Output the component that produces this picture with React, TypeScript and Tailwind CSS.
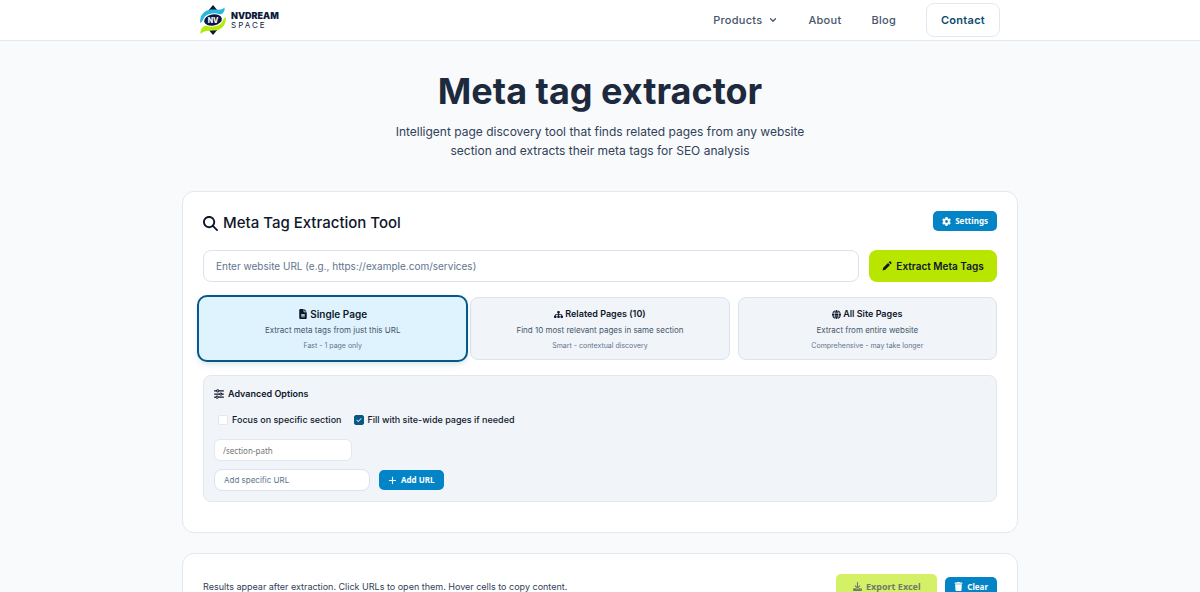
import * as React from "react";
import { clsx } from "clsx";
import {
  FaCheck,
  FaDownload,
  FaFileLines,
  FaGear,
  FaGlobe,
  FaMagnifyingGlass,
  FaPlus,
  FaSitemap,
  FaSliders,
  FaTrash,
} from "react-icons/fa6";
import { ChevronDown } from "lucide-react";

function Logo(): React.ReactElement {
  return (
    <a href="#home" className="flex items-center gap-[5px]" aria-label="NVDream Space">
      <svg viewBox="0 0 26 30" className="h-[30px] w-[26px]" aria-hidden="true">
        <path d="M13 0 18 6 13 10 8 6ZM13 30 8 24 13 20 18 24Z" fill="#0b1740" />
        <path
          d="M0 18C0 10 4 5 11 4.500C17 4 21 6 24.500 2.500C25.500 8 21 10.500 16 9.500C9 8 5 10 3.500 14C2.500 16 1.500 17 0 18Z"
          fill="#27b9dc"
        />
        <path
          d="M26 12C26 20 22 25 15 25.500C9 26 5 24.500 .5 29C0 23 5 19.500 10 20.500C17 22 21 20 22.500 16C23.500 14 24.500 13 26 12Z"
          fill="#b5ea0a"
        />
        <ellipse cx="13" cy="15" rx="10" ry="6.500" fill="#ffffff" transform="rotate(-10 13 15)" />
        <ellipse cx="13" cy="15" rx="9" ry="5.500" fill="#0b1740" transform="rotate(-10 13 15)" />
        <text
          x="13"
          y="17.500"
          textAnchor="middle"
          fill="#ffffff"
          className="font-['Inter',sans-serif] text-[7px] font-extrabold"
        >
          NV
        </text>
      </svg>
      <span className="flex flex-col gap-px text-[#0f1b3d]">
        <span className="text-[9px] leading-[9px] font-black">NVDREAM</span>
        <span className="text-[8px] leading-[8px] tracking-[2px]">SPACE</span>
      </span>
    </a>
  );
}

function PenIcon(): React.ReactElement {
  return (
    <svg viewBox="0 0 20 20" className="size-2.5" fill="currentColor" aria-hidden="true">
      <path d="M1 19 2.500 13.500 12 4l4 4-9.500 9.500ZM13.300 2.700 14.800 1.200Q16 0 17.200 1.200L18.800 2.800Q20 4 18.800 5.200L17.300 6.700Z" />
    </svg>
  );
}

function Header(): React.ReactElement {
  return (
    <header className="border-b border-slate-200 bg-white">
      <div className="mx-auto flex h-10 max-w-[800px] items-center justify-between">
        <Logo />
        <nav className="flex items-center gap-[30px] text-[11px] font-medium tracking-wide text-slate-600">
          <button type="button" className="flex items-center gap-1.5">
            Products
            <ChevronDown className="size-2.5" strokeWidth={3} />
          </button>
          <a href="#about">About</a>
          <a href="#blog">Blog</a>
          <a
            href="#contact"
            className="flex h-[34px] items-center rounded-lg border border-slate-200 px-3.5 font-semibold text-[#0c4a6e]"
          >
            Contact
          </a>
        </nav>
      </div>
    </header>
  );
}

interface BlueButtonProps {
  icon: React.ReactNode;
  children: React.ReactNode;
}

function BlueButton({ icon, children }: BlueButtonProps): React.ReactElement {
  return (
    <button
      type="button"
      className="flex h-5 items-center gap-1 rounded-[5px] bg-[#0284c7] px-[9px] font-['Noto_Sans',sans-serif] text-[8px] font-bold text-white"
    >
      <span className="text-[9px]">{icon}</span>
      {children}
    </button>
  );
}

interface Mode {
  id: string;
  icon: React.ReactNode;
  title: string;
  text: string;
  note: string;
}

const MODES: Mode[] = [
  {
    id: "single",
    icon: <FaFileLines />,
    title: "Single Page",
    text: "Extract meta tags from just this URL",
    note: "Fast - 1 page only",
  },
  {
    id: "related",
    icon: <FaSitemap />,
    title: "Related Pages (10)",
    text: "Find 10 most relevant pages in same section",
    note: "Smart - contextual discovery",
  },
  {
    id: "all",
    icon: <FaGlobe />,
    title: "All Site Pages",
    text: "Extract from entire website",
    note: "Comprehensive - may take longer",
  },
];

function ModePicker(): React.ReactElement {
  const [mode, setMode] = React.useState("single");

  return (
    <div className="mt-[15px] grid grid-cols-3 gap-2">
      {MODES.map((m) => (
        <button
          key={m.id}
          type="button"
          aria-pressed={mode === m.id}
          onClick={() => setMode(m.id)}
          className={clsx(
            "flex flex-col items-center justify-center",
            mode === m.id
              ? "z-10 -mx-1.5 -my-0.5 rounded-[10px] border-2 border-[#075985] bg-[#dff3ff] py-2 shadow-md shadow-sky-900/10"
              : "rounded-lg border border-[#dbe3ee] bg-slate-100 pt-[9px] pb-2",
          )}
        >
          <span
            className={clsx(
              "flex items-center gap-0.5 leading-[14px] font-semibold text-slate-900",
              mode === m.id ? "text-[10px]" : "text-[9px]",
            )}
          >
            {m.icon}
            {m.title}
          </span>
          <span className="mt-0.5 text-[8px] leading-[14px] text-slate-600">{m.text}</span>
          <span className="mt-1 text-[7px] leading-[10px] text-slate-500">{m.note}</span>
        </button>
      ))}
    </div>
  );
}

interface CheckOptionProps {
  label: string;
  defaultChecked?: boolean;
}

function CheckOption({ label, defaultChecked }: CheckOptionProps): React.ReactElement {
  return (
    <label className="flex items-center gap-1 text-[9px] font-medium text-slate-900">
      <span className="grid size-2.5 place-items-center">
        <input
          type="checkbox"
          defaultChecked={defaultChecked}
          className="peer col-start-1 row-start-1 size-2.5 appearance-none rounded-[2px] border border-slate-200 bg-white checked:border-[#075985] checked:bg-[#075985]"
        />
        <FaCheck className="pointer-events-none col-start-1 row-start-1 hidden size-1.5 text-white peer-checked:block" />
      </span>
      {label}
    </label>
  );
}

function AdvancedOptions(): React.ReactElement {
  return (
    <section className="mt-[15px] rounded-lg border border-slate-200 bg-slate-100 p-2.5">
      <h3 className="flex items-center gap-1 text-[9px] leading-4 font-semibold text-slate-900">
        <FaSliders className="size-2.5" />
        Advanced Options
      </h3>
      <div className="mt-2.5 ml-1 flex h-4 items-center gap-3">
        <CheckOption label="Focus on specific section" />
        <CheckOption label="Fill with site-wide pages if needed" defaultChecked />
      </div>
      <input
        type="text"
        aria-label="Section path"
        placeholder="/section-path"
        className="mt-[11px] block h-[22px] w-[138px] rounded-md border border-slate-200 bg-white px-2 font-['Noto_Sans',sans-serif] text-[8px] placeholder:text-[#757575]"
      />
      <div className="mt-2 flex items-center gap-[9px]">
        <input
          type="url"
          aria-label="Specific URL"
          placeholder="Add specific URL"
          className="h-[22px] w-[156px] rounded-lg border border-[#dbe3ee] bg-white px-[9px] text-[8px] placeholder:text-slate-500"
        />
        <BlueButton icon={<FaPlus />}>Add URL</BlueButton>
      </div>
    </section>
  );
}

export default function App(): React.ReactElement {
  return (
    <div className="min-h-screen bg-slate-50 font-['Inter',sans-serif] text-slate-900">
      <Header />
      <main className="mx-auto max-w-[836px]">
        <div className="pt-7 text-center">
          <h1 className="text-4xl leading-[44px] font-bold text-slate-800">Meta tag extractor</h1>
          <p className="mx-auto mt-[9px] max-w-[440px] text-xs leading-[19px] text-slate-700">
            Intelligent page discovery tool that finds related pages from any website section and extracts their meta
            tags for SEO analysis
          </p>
        </div>

        <section className="mt-[31px] rounded-xl border border-slate-200 bg-white px-5 pt-[19px] pb-[30px]">
          <div className="flex items-start justify-between">
            <h2 className="flex h-6 items-center gap-[5px] text-[15px] font-medium">
              <FaMagnifyingGlass />
              Meta Tag Extraction Tool
            </h2>
            <BlueButton icon={<FaGear />}>Settings</BlueButton>
          </div>
          <form className="mt-[15px] flex gap-2.5" onSubmit={(e) => e.preventDefault()}>
            <input
              type="url"
              aria-label="Website URL"
              placeholder="Enter website URL (e.g., https://example.com/services)"
              className="h-8 min-w-0 flex-1 rounded-lg border border-[#dbe3ee] bg-white px-3 text-[10px] placeholder:text-slate-500"
            />
            <button
              type="submit"
              className="flex h-8 w-32 items-center justify-center gap-1 rounded-lg bg-[#b8e600] text-[10px] font-semibold text-slate-900"
            >
              <PenIcon />
              Extract Meta Tags
            </button>
          </form>
          <ModePicker />
          <AdvancedOptions />
        </section>

        <section className="mt-5 rounded-xl border border-slate-200 bg-white px-5 pt-5 pb-10">
          <div className="flex items-center justify-between">
            <p className="text-[9px] text-slate-700">
              Results appear after extraction. Click URLs to open them. Hover cells to copy content.
            </p>
            <div className="flex items-center gap-2">
              <button
                type="button"
                disabled
                className="flex h-[25px] w-[101px] items-center justify-center gap-1 rounded-[5px] bg-[#d4f066] font-['Noto_Sans',sans-serif] text-[9px] font-bold text-[#6f7b6b]"
              >
                <FaDownload />
                Export Excel
              </button>
              <BlueButton icon={<FaTrash />}>Clear</BlueButton>
            </div>
          </div>
        </section>
      </main>
    </div>
  );
}
